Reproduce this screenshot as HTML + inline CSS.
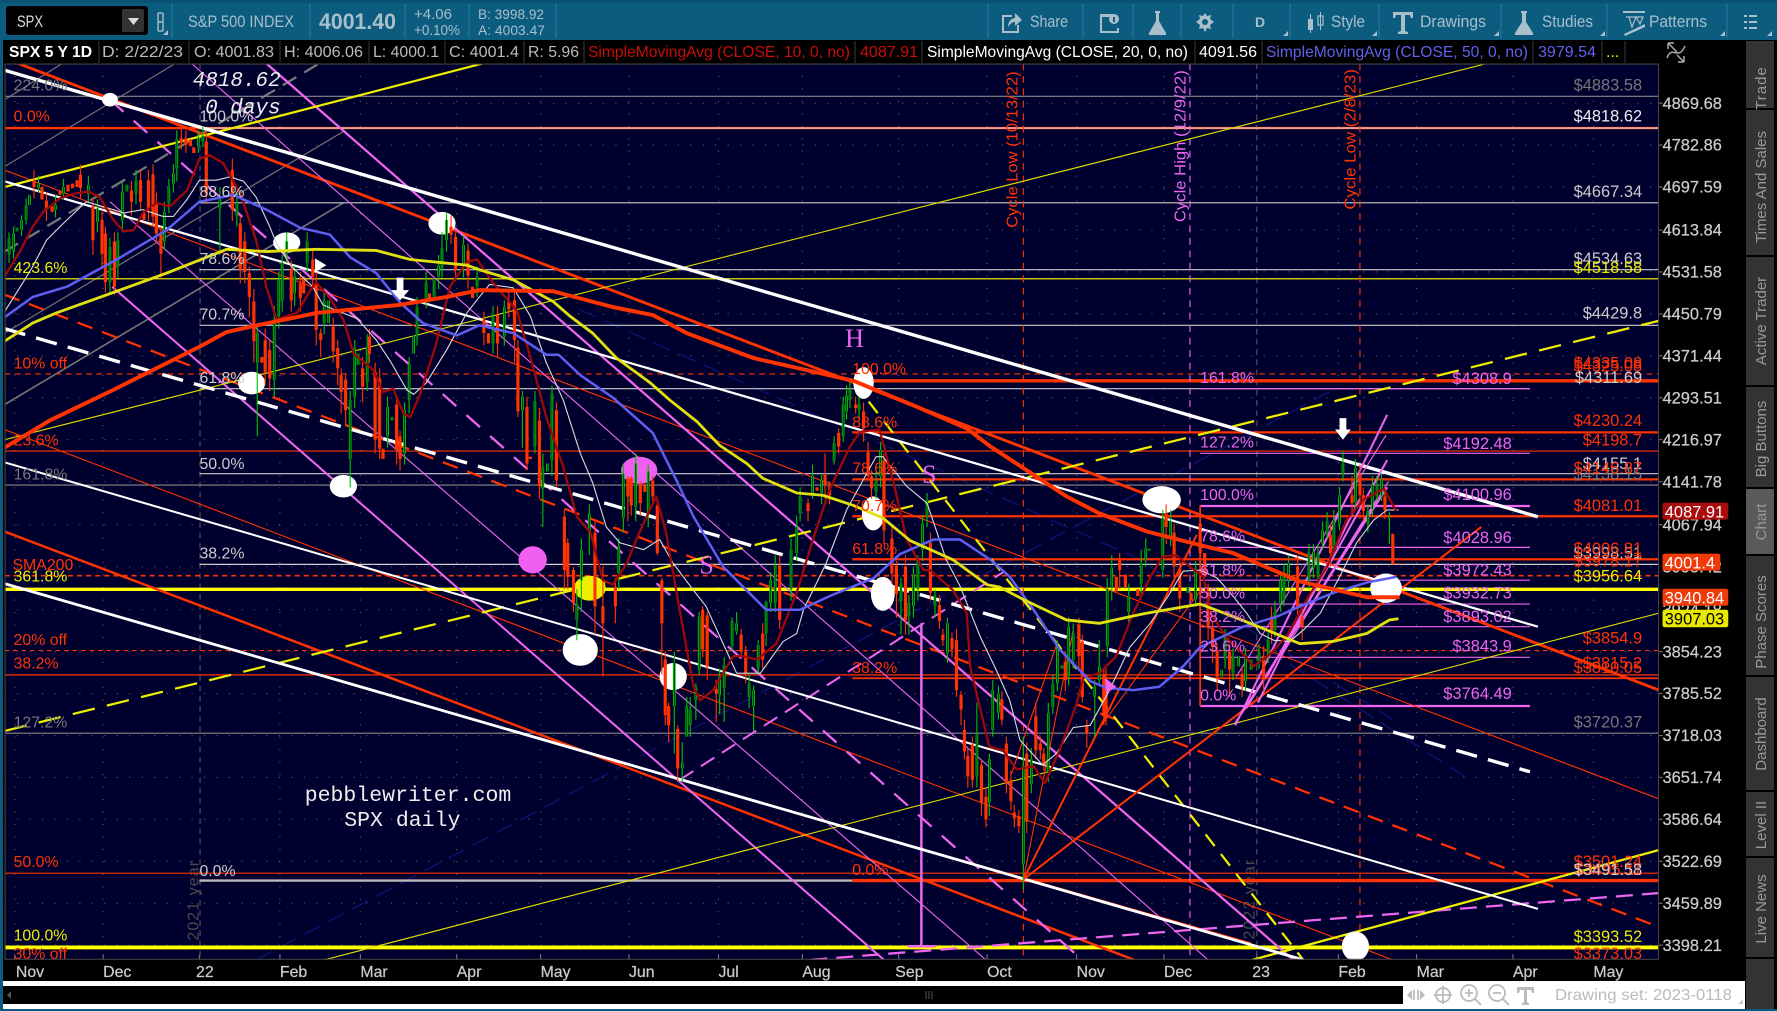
<!DOCTYPE html>
<html><head><meta charset="utf-8"><title>SPX</title>
<style>
html,body{margin:0;padding:0;background:#000;width:1777px;height:1011px;overflow:hidden}
svg{display:block;position:absolute;left:0;top:0}
text{font-family:"Liberation Sans",sans-serif}
.tb{fill:#a9bfca;font-size:16.5px}
.lg{font-size:16px;fill:#bbb}
.e{text-anchor:end;font-size:14.5px}
.f{font-size:14px}
.R{fill:#ff3300}.P{fill:#ee66ee}.Y{fill:#eeee00}.W{fill:#ccc}.G{fill:#777}
.ax{font-size:14.5px;fill:#ccc;stroke:#ccc;stroke-width:.2px}
.mo{font-size:14px;fill:#ccc;stroke:#ccc;stroke-width:.2px}
.tab{font-size:15px;fill:#999;text-anchor:middle}
</style></head><body>
<svg width="1777" height="1011" viewBox="0 0 1777 1011" xmlns="http://www.w3.org/2000/svg">
<rect width="1777" height="1011" fill="#000"/>
<!-- toolbar -->
<rect width="1777" height="40" fill="#0c5c80"/>
<rect width="1777" height="3" fill="#0a5274"/>
<rect x="0" y="40" width="3" height="971" fill="#0c5c80"/>
<rect x="0" y="1009" width="1777" height="2" fill="#0c5c80"/>
<g stroke="#1b7398" stroke-width="1.500">
<path d="M172 4V38M310 4V38M405 4V38M469 4V38M556 4V38M988 4V38M1083 4V38M1133 4V38M1181 4V38M1233 4V38M1290 4V38M1379 4V38M1501 4V38M1607 4V38M1727 4V38"/>
</g>
<rect x="6" y="6" width="142" height="29" rx="3" fill="#000"/>
<rect x="122" y="9" width="22" height="23" rx="2" fill="#333"/>
<path d="M128 18H139L133.500 25Z" fill="#ddd"/>
<text x="17" y="27" font-size="17" fill="#ddd" textLength="26" lengthAdjust="spacingAndGlyphs">SPX</text>
<rect x="158" y="13" width="5" height="9" rx="1" fill="none" stroke="#9fb6c2" stroke-width="1.500"/>
<rect x="158" y="22" width="5" height="9" rx="1" fill="none" stroke="#9fb6c2" stroke-width="1.500"/>
<path d="M168 35L163 35L168 30Z" fill="#a9bfca"/>
<text x="188" y="27" class="tb" style="font-size:17px" textLength="106" lengthAdjust="spacingAndGlyphs">S&amp;P 500 INDEX</text>
<text x="319" y="29" font-size="22" font-weight="bold" fill="#a9bfca" textLength="77" lengthAdjust="spacingAndGlyphs">4001.40</text>
<text x="414" y="19" font-size="14.500" fill="#a9bfca" textLength="38" lengthAdjust="spacingAndGlyphs">+4.06</text>
<text x="414" y="35" font-size="14.500" fill="#a9bfca" textLength="46" lengthAdjust="spacingAndGlyphs">+0.10%</text>
<text x="478" y="19" font-size="13.500" fill="#a9bfca" textLength="66" lengthAdjust="spacingAndGlyphs">B: 3998.92</text>
<text x="478" y="35" font-size="13.500" fill="#a9bfca" textLength="67" lengthAdjust="spacingAndGlyphs">A: 4003.47</text>
<!-- toolbar right icons -->
<g fill="#a9bfca">
<path d="M1002 15H1012V17H1004V31H1017V25H1019V33H1002Z"/><path d="M1008 27C1008 21 1012 18 1015 18V13L1022 20L1015 26V22C1012 22 1010 24 1008 27Z"/>
<text x="1030" y="27" class="tb" textLength="38" lengthAdjust="spacingAndGlyphs">Share</text>
<path d="M1100 14H1113V17H1102V31H1117V28H1119V33H1100Z"/><circle cx="1114" cy="19" r="5"/><rect x="1113" y="17" width="2" height="5" fill="#0c5c80"/>
<path d="M1155 11H1160V13H1159V21L1166 33V35H1149V33L1156 21V13H1155Z"/>
<path d="M1205 13L1207 16L1211 15L1210 19L1214 22L1210 25L1211 29L1207 28L1205 32L1203 28L1199 29L1200 25L1196 22L1200 19L1199 15L1203 16Z"/><circle cx="1205" cy="22" r="3" fill="#0c5c80"/>
<text x="1255" y="27" font-size="14" font-weight="bold" fill="#a9bfca">D</text>
<rect x="1308" y="19" width="5" height="11"/><rect x="1310" y="14" width="1" height="19"/><rect x="1318" y="16" width="5" height="9" fill="none" stroke="#a9bfca" stroke-width="1.200"/><rect x="1320" y="12" width="1" height="18"/>
<text x="1331" y="27" class="tb" textLength="34" lengthAdjust="spacingAndGlyphs">Style</text>
<path d="M1393 12H1413V18H1411L1410 15H1405V31L1408 32V34H1398V32L1401 31V15H1396L1395 18H1393Z"/>
<text x="1420" y="27" class="tb" textLength="66" lengthAdjust="spacingAndGlyphs">Drawings</text>
<path d="M1521 11H1527V13H1526V22L1533 33V35H1515V33L1522 22V13H1521Z"/>
<text x="1542" y="27" class="tb" textLength="51" lengthAdjust="spacingAndGlyphs">Studies</text>
<rect x="1623" y="11" width="22" height="2"/><path d="M1626 17H1643L1640 24L1636 17L1632 27L1629 17Z" fill="none" stroke="#a9bfca" stroke-width="1.200"/><path d="M1624 34L1645 24V27L1625 36Z"/>
<text x="1649" y="27" class="tb" textLength="58" lengthAdjust="spacingAndGlyphs">Patterns</text>
<rect x="1744" y="15" width="3" height="2"/><rect x="1749" y="15" width="8" height="2"/><rect x="1744" y="21" width="3" height="2"/><rect x="1749" y="21" width="8" height="2"/><rect x="1744" y="27" width="3" height="2"/><rect x="1749" y="27" width="8" height="2"/>
<path d="M1288 36H1283L1288 31ZM1377 36H1372L1377 31ZM1499 36H1494L1499 31ZM1605 36H1600L1605 31ZM1725 36H1720L1725 31ZM1772 36H1767L1772 31Z"/>
</g>
<!-- legend -->
<rect x="3" y="41" width="1742" height="22" fill="#000"/>
<g stroke="#3a3a3a" stroke-width="1"><path d="M99 41V63M189 41V63M280 41V63M369 41V63M445 41V63M524 41V63M584 41V63M855 41V63M922 41V63M1195 41V63M1262 41V63M1533 41V63M1602 41V63M1625 41V63"/></g>
<text x="9" y="57" font-size="16" font-weight="bold" fill="#fff" textLength="83" lengthAdjust="spacingAndGlyphs">SPX 5 Y 1D</text>
<text x="102" y="57" class="lg" textLength="81" lengthAdjust="spacingAndGlyphs">D: 2/22/23</text>
<text x="194" y="57" class="lg" textLength="80" lengthAdjust="spacingAndGlyphs">O: 4001.83</text>
<text x="284" y="57" class="lg" textLength="79" lengthAdjust="spacingAndGlyphs">H: 4006.06</text>
<text x="373" y="57" class="lg" textLength="66" lengthAdjust="spacingAndGlyphs">L: 4000.1</text>
<text x="449" y="57" class="lg" textLength="70" lengthAdjust="spacingAndGlyphs">C: 4001.4</text>
<text x="528" y="57" class="lg" textLength="51" lengthAdjust="spacingAndGlyphs">R: 5.96</text>
<text x="588" y="57" class="lg" style="fill:#c80c0c" textLength="262" lengthAdjust="spacingAndGlyphs">SimpleMovingAvg (CLOSE, 10, 0, no)</text>
<text x="860" y="57" class="lg" style="fill:#c80c0c" textLength="58" lengthAdjust="spacingAndGlyphs">4087.91</text>
<text x="927" y="57" class="lg" style="fill:#fff" textLength="261" lengthAdjust="spacingAndGlyphs">SimpleMovingAvg (CLOSE, 20, 0, no)</text>
<text x="1199" y="57" class="lg" style="fill:#fff" textLength="58" lengthAdjust="spacingAndGlyphs">4091.56</text>
<text x="1266" y="57" class="lg" style="fill:#6060f0" textLength="262" lengthAdjust="spacingAndGlyphs">SimpleMovingAvg (CLOSE, 50, 0, no)</text>
<text x="1538" y="57" class="lg" style="fill:#6060f0" textLength="58" lengthAdjust="spacingAndGlyphs">3979.54</text>
<text x="1606" y="57" class="lg" style="fill:#eeee00">...</text>
<path d="M1668 43L1677 52M1668 43V49M1668 43H1674M1684 62L1677 55M1684 62V56M1684 62H1678M1667 58C1672 44 1678 62 1685 46" fill="none" stroke="#aaa" stroke-width="1.500"/>
<!-- tabs -->
<g fill="#333">
<rect x="1746" y="41" width="28" height="67"/><rect x="1746" y="110" width="28" height="145"/><rect x="1746" y="257" width="28" height="128"/><rect x="1746" y="387" width="28" height="100"/><rect x="1746" y="489" width="28" height="65" fill="#5a5a5a"/><rect x="1746" y="556" width="28" height="119"/><rect x="1746" y="677" width="28" height="113"/><rect x="1746" y="792" width="28" height="64"/><rect x="1746" y="858" width="28" height="99"/><rect x="1746" y="959" width="28" height="50"/>
</g>
<g>
<text transform="translate(1766 88) rotate(-90)" class="tab" letter-spacing="1">Trade</text>
<text transform="translate(1766 187) rotate(-90)" class="tab">Times And Sales</text>
<text transform="translate(1766 321) rotate(-90)" class="tab">Active Trader</text>
<text transform="translate(1766 439) rotate(-90)" class="tab">Big Buttons</text>
<text transform="translate(1766 522) rotate(-90)" class="tab">Chart</text>
<text transform="translate(1766 622) rotate(-90)" class="tab">Phase Scores</text>
<text transform="translate(1766 734) rotate(-90)" class="tab">Dashboard</text>
<text transform="translate(1766 825) rotate(-90)" class="tab">Level II</text>
<text transform="translate(1766 909) rotate(-90)" class="tab">Live News</text>
</g>
<!-- bottom bars -->
<rect x="3" y="981" width="1742" height="28" fill="#fff"/>
<rect x="3" y="986" width="1400" height="18" fill="#000"/>
<path d="M7 995L11 991V999Z" fill="#555"/>
<path d="M926 991V999M929 991V999M932 991V999" stroke="#555" stroke-width="1"/>
<g fill="none" stroke="#bbb" stroke-width="1.800">
<path d="M1407 995L1412 990V1000ZM1425 995L1420 990V1000Z" fill="#bbb" stroke="none"/><path d="M1414 990V1000M1418 990V1000"/>
<circle cx="1443" cy="995" r="7"/><path d="M1434 995H1452M1443 986V1004"/>
<circle cx="1469" cy="993" r="8"/><path d="M1475 999L1481 1005M1465 993H1473M1469 989V997"/>
<circle cx="1497" cy="993" r="8"/><path d="M1503 999L1509 1005M1493 993H1501"/>
</g>
<path d="M1517 987H1534V993H1532L1531 990H1527V1002L1529 1003V1005H1522V1003L1524 1002V990H1520L1519 993H1517Z" fill="#bbb"/>
<text x="1555" y="1000" font-size="16" fill="#bbb" textLength="177" lengthAdjust="spacingAndGlyphs">Drawing set: 2023-0118</text>
<path d="M1743 1004H1738L1743 999Z" fill="#ccc"/>
<g transform="scale(1.13329)">
<!-- time axis -->
<text class="mo" x="14" y="862">Nov</text><text class="mo" x="91" y="862">Dec</text><text class="mo" x="173" y="862">22</text><text class="mo" x="247" y="862">Feb</text><text class="mo" x="318" y="862">Mar</text><text class="mo" x="403" y="862">Apr</text><text class="mo" x="477" y="862">May</text><text class="mo" x="555" y="862">Jun</text><text class="mo" x="634" y="862">Jul</text><text class="mo" x="708" y="862">Aug</text><text class="mo" x="790" y="862">Sep</text><text class="mo" x="871" y="862">Oct</text><text class="mo" x="950" y="862">Nov</text><text class="mo" x="1027" y="862">Dec</text><text class="mo" x="1105" y="862">23</text><text class="mo" x="1181" y="862">Feb</text><text class="mo" x="1250" y="862">Mar</text><text class="mo" x="1335" y="862">Apr</text><text class="mo" x="1406" y="862">May</text>
<!-- chart area -->
<svg x="4" y="56" width="1460" height="791" viewBox="4 56 1460 791" style="position:static;overflow:hidden">
<rect x="4" y="56" width="1460" height="791" fill="#00002e"/>
<!-- dotted grid -->
<g stroke="#5a5a5a" stroke-width="1" stroke-dasharray="1 10" fill="none">
<path d="M4 91H1464M4 128H1464M4 165H1464M4 203H1464M4 240H1464M4 277H1464M4 314H1464M4 351H1464M4 388H1464M4 425H1464M4 463H1464M4 500H1464M4 538H1464M4 575H1464M4 612H1464M4 649H1464M4 686H1464M4 723H1464M4 760H1464M4 797H1464M4 834H1464"/>
<path d="M13 56V847M91 56V847M247 56V847M318 56V847M403 56V847M477 56V847M555 56V847M634 56V847M708 56V847M793 56V847M871 56V847M950 56V847M1027 56V847M1181 56V847M1250 56V847M1335 56V847M1406 56V847"/>
</g>
<path d="M13 842V847M91 842V847M176 842V847M247 842V847M318 842V847M403 842V847M477 842V847M555 842V847M634 842V847M708 842V847M793 842V847M871 842V847M950 842V847M1027 842V847M1109 842V847M1181 842V847M1250 842V847M1335 842V847M1406 842V847" stroke="#777" fill="none"/>
<path d="M176.500 56V847M1109 56V847" stroke="#555" stroke-dasharray="5 4" fill="none"/>
<text transform="translate(175 830) rotate(-90)" font-size="14" fill="#4a4a4a" letter-spacing="1">2021 year</text>
<text transform="translate(1107 829) rotate(-90)" font-size="14" fill="#4a4a4a" letter-spacing="1">2022 year</text>
<!-- gray fan -->
<g fill="none" stroke="#777" stroke-width="1">
<path d="M4 147L153 57M4 88L55 56M4 294L303 116"/>
<path d="M4 357L303 179" stroke-width="1.400"/>
<path d="M4 222L280 57" stroke-width="2" stroke-dasharray="14 8"/>
</g>
<!-- dark navy -->
<g fill="none" stroke="#10106c" stroke-width="1.300" stroke-dasharray="16 8">
<path d="M226 847L1180 342M511 273L1000 491L1229 635M1118 573L1300 690"/>
</g>
<!-- horizontal levels -->
<g fill="none">
<path d="M4 85H1464" stroke="#888"/>
<path d="M4 113H1464" stroke="#ff3300" stroke-width="2"/><path d="M176 113H1464" stroke="#ddd" stroke-width="1.500" opacity=".75"/>
<path d="M176 179H1464M176 238H1464M176 287H1464M176 343H1350M176 418H1464M176 498H1464" stroke="#ccc"/>
<path d="M4 246H1464" stroke="#ffff00"/>
<path d="M4 330H1464" stroke="#ff3300" stroke-dasharray="5 4"/>
<path d="M752 336H1464" stroke="#ff3300" stroke-width="3"/>
<path d="M4 398H1464" stroke="#ff3300"/>
<path d="M752 381.500H1464" stroke="#ff3300" stroke-width="2"/>
<path d="M4 428H1464" stroke="#888"/>
<path d="M752 423H1464" stroke="#ff3300" stroke-width="2"/>
<path d="M752 455.500H1464" stroke="#ff3300" stroke-width="2"/>
<path d="M752 493.500H1464" stroke="#ff3300" stroke-width="2"/>
<path d="M4 508H1464" stroke="#ff3300" stroke-width="1.500" stroke-dasharray="4.500 3.500"/>
<path d="M4 520H1464" stroke="#ffff00" stroke-width="3"/>
<path d="M4 574H1464" stroke="#ff3300" stroke-dasharray="4 3.500"/>
<path d="M4 595.500H1464" stroke="#ff3300"/><path d="M752 598.500H1464" stroke="#ff3300" stroke-width="1.500"/>
<path d="M4 647H1464" stroke="#888"/>
<path d="M4 770.500H1464" stroke="#ff3300"/>
<path d="M176 777H752" stroke="#bbb" stroke-width="2"/>
<path d="M752 777H1464" stroke="#ff3300" stroke-width="3"/>
<path d="M4 836H1464" stroke="#ffff00" stroke-width="3.500"/>
<g stroke="#ee66ee"><path d="M1059 343H1350M1059 400H1350M1059 483H1350M1059 512H1350M1059 533H1350M1059 553H1350M1059 580H1350"/><path d="M1059 446.500H1350M1059 623H1350" stroke-width="2"/></g>
</g>
<!-- vertical cycle -->
<g fill="none" stroke-dasharray="6 5">
<path d="M903 56V847M1200 56V847" stroke="#ff3300"/><path d="M1050 56V847" stroke="#ee66ee"/>
</g>
<path d="M1059 446V623" stroke="#ff3300" stroke-width="1.500"/>
<!-- sloped lines -->
<g fill="none">
<path d="M4 150L1464 705" stroke="#ff3300" stroke-width="1"/>
<path d="M4 379L1229 847" stroke="#ff3300" stroke-width="1"/>
<path d="M509 662L1104 832" stroke="#ff3300" stroke-width="1"/>
<path d="M4 469L1001 847" stroke="#ff3300" stroke-width="2.200"/>
<path d="M4 260L1464 818" stroke="#ff3300" stroke-width="2" stroke-dasharray="14 9"/>
<path d="M16 56L1464 609" stroke="#ff3300" stroke-width="2.500"/>
<path d="M169 56L1066 847M97 178L870 847" stroke="#ee66ee" stroke-width="1"/>
<path d="M235 56L1141 847" stroke="#ee66ee" stroke-width="2"/>
<path d="M99 253L780 847" stroke="#ee66ee" stroke-width="1.800"/>
<path d="M97 88L955 847" stroke="#ee66ee" stroke-width="2" stroke-dasharray="16 12"/>
<path d="M600 688L885 505" stroke="#ee66ee" stroke-width="1.800" stroke-dasharray="14 8"/>
<path d="M813 550V835M801 835H826" stroke="#ee66ee" stroke-width="2.200"/>
<path d="M715 847L1464 788" stroke="#ee66ee" stroke-width="2" stroke-dasharray="15 8"/>
<path d="M753 337L1150 847" stroke="#eeee00" stroke-width="2" stroke-dasharray="13 9"/>
<path d="M4 165L426 56" stroke="#eeee00" stroke-width="2"/>
<path d="M4 645L1464 283" stroke="#eeee00" stroke-width="2" stroke-dasharray="20 11"/>
<path d="M4 388L1312 56" stroke="#dddd00" stroke-width="1"/>
<path d="M286 847L1464 541" stroke="#dddd00" stroke-width="1"/>
<path d="M1105 847L1464 750" stroke="#eeee00" stroke-width="2"/>
<path d="M4 62L1357 456" stroke="#fff" stroke-width="3"/>
<path d="M4 160L1357 553" stroke="#fff" stroke-width="2"/>
<path d="M4 290L1350 681" stroke="#fff" stroke-width="3" stroke-dasharray="19 10"/>
<path d="M4 408L1357 802" stroke="#fff" stroke-width="1.800"/>
<path d="M4 515L1150 847" stroke="#fff" stroke-width="2.500"/>
<!-- red fan -->
<path d="M903 776L1056 472M903 776L1307 465" stroke="#ff3300" stroke-width="1.800"/>
<path d="M903 776L947 556M932 570L892 684M972 640L1060 520" stroke="#ff3300" stroke-width="1"/>
<!-- pink rising -->
<path d="M1090 640L1224 366M1118 597L1224 406M1090 638L1224 430M1110 620L1200 440" stroke="#ee66ee" stroke-width="1.800"/>
<path d="M1091 597L1223 384M1100 625L1215 440M1130 580L1225 425" stroke="#ee66ee" stroke-width="1"/>
</g>
<!-- blobs -->
<g fill="#fff">
<ellipse cx="97" cy="88" rx="7" ry="6"/><ellipse cx="253" cy="214" rx="12" ry="9"/><ellipse cx="390" cy="197" rx="12" ry="10"/><ellipse cx="222" cy="338" rx="12" ry="10"/><ellipse cx="303" cy="429" rx="12" ry="10"/><ellipse cx="512" cy="573.500" rx="15.500" ry="14"/><ellipse cx="594" cy="597" rx="12" ry="12"/><ellipse cx="762" cy="338" rx="9" ry="14"/><ellipse cx="770.500" cy="453" rx="10" ry="15"/><ellipse cx="779" cy="524" rx="10.500" ry="15"/><ellipse cx="1025" cy="441" rx="17" ry="12"/><ellipse cx="1223" cy="519" rx="14" ry="13"/><ellipse cx="1196" cy="835" rx="12" ry="13"/>
<ellipse cx="564" cy="415" rx="16" ry="12" fill="#f060f0"/><ellipse cx="470" cy="494" rx="12.500" ry="12" fill="#f060f0"/><ellipse cx="520.500" cy="519" rx="14" ry="11" fill="#eeee00"/>
</g>
<!-- candles -->
<defs><path id="gb" d="M8 210V225M12 206V221M15 201V204M19 194V203M23 181V194M26 172V181M34 162V166M49 181V185M56 165V171M78 163V171M86 184V196M97 218V249M104 212V235M108 169V194M112 163V169M120 159V171M145 187V213M149 165V179M153 153V162M156 123V149M175 122V129M179 120V125M194 176V184M209 179V191M227 294V320M242 282V335M246 247V279M249 232V265M253 213V224M260 244V259M271 213V232M286 265V285M290 265V285M309 353V405M313 307V350M316 312V322M324 306V337M342 359V385M346 368V371M357 362V400M361 321V353M365 296V312M368 271V297M376 249V263M383 246V262M387 234V244M390 219V237M394 194V212M409 216V235M421 244V253M435 279V303M445 271V297M461 350V362M472 354V394M479 412V431M483 409V416M487 347V406M509 533V547M513 485V512M520 453V470M546 482V506M550 418V457M561 409V447M572 416V454M595 585V623M602 673V678M606 623V650M609 626V640M614 606V618M617 544V591M635 597V613M639 587V607M646 548V570M650 550V557M661 603V615M665 609V623M669 569V590M676 531V559M680 512V532M684 499V532M698 485V520M703 465V488M706 438V453M717 420V435M725 424V435M736 391V407M744 357V385M747 349V363M750 344V353M758 356V362M773 425V434M777 397V420M795 515V531M802 532V544M806 507V535M810 494V520M814 462V485M818 441V456M825 525V535M836 550V576M862 648V685M873 670V708M876 609V644M881 612V629M903 676V762M910 670V692M925 629V682M929 604V624M933 570V603M937 587V590M943 553V597M947 559V582M966 606V615M970 588V600M981 501V518M977 520V570M996 526V540M1007 497V515M1011 484V494M1014 484V486M1026 457V503M1033 460V475M1048 518V523M1055 503V529M1078 591V597M1081 562V582M1088 579V594M1093 579V588M1099 578V601M1104 582V591M1111 575V584M1119 565V579M1125 540V556M1130 512V532M1133 506V529M1137 497V512M1155 488V512M1159 487V501M1163 488V509M1167 468V479M1171 460V470M1177 459V485M1182 437V462M1185 409V418M1196 413V443M1207 451V462M1211 428V449M1215 429V438M1219 423V437M1226 456V457"/></defs>
<g fill="none">
<path stroke="#00c000" stroke-width="1" d="M8 205V232M12 200V228M19 190V208M23 175V198M34 155V170M49 172V192M56 158V176M78 155V178M86 176V205M97 210V258M104 205V245M108 160V205M120 150V180M145 178V220M149 158V188M153 145V170M156 115V160M175 115V135M179 112V130M194 165V225M209 170V200M227 285V385M242 270V350M246 240V290M249 225V275M253 205V232M260 235V270M271 205V240M286 255V295M309 345V430M313 300V360M324 295V345M342 350V395M357 355V410M361 315V365M368 262V305M376 240V272M387 225V255M390 205V245M394 188V222M409 208V245M421 235V262M435 270V312M445 265V305M461 345V395M472 345V400M479 400V465M487 340V420M509 520V565M513 475V540M520 445V490M546 475V520M550 410V470M561 400V460M572 410V465M595 575V665M602 655V690M606 615V650M609 615V650M614 603V635M617 540V595M635 590V630M639 580V637M646 545V575M650 540V560M661 595V625M665 605V645M669 565V595M676 530V570M680 505V540M684 490V540M698 475V530M703 455V495M706 430V460M717 410V440M725 418V445M736 385V410M744 350V390M747 340V370M750 335V360M758 350V370M773 415V440M777 390V430M795 510V560M802 525V560M806 500V545M810 490V530M814 455V495M818 435V465M825 520V545M836 545V585M862 620V695M873 665V720M876 600V650M881 605V635M903 650V785M910 660V700M925 620V690M929 595V630M933 565V610M943 545V605M947 550V590M966 600V650M970 565V605M981 490V530M977 510V580M996 515V550M1007 485V525M1011 475V500M1026 450V510M1033 450V482M1055 495V535M1081 555V590M1088 572V600M1099 572V610M1111 568V590M1119 558V585M1125 530V562M1130 505V540M1133 498V535M1137 490V518M1155 480V520M1159 480V510M1163 480V515M1167 460V485M1171 452V475M1177 450V490M1182 430V468M1185 398V425M1196 405V450M1207 445V470M1211 420V455M1215 420V442M1219 418V442M1226 452V480"/>
<use href="#gb" stroke="#00c800" stroke-width="2.400"/>
<use href="#gb" stroke="#002a10" stroke-width=".8"/>
<path stroke="#ff3300" stroke-width="1" d="M30 150V175M41 170V195M71 145V175M82 175V225M90 185V235M93 200V258M101 205V260M116 160V190M124 150V185M131 150V195M135 145V200M138 170V215M142 200V245M160 112V132M164 115V135M182 115V180M205 140V195M212 190V250M216 205V250M220 235V280M224 255V320M234 290V340M238 300V345M257 230V275M265 240V275M276 220V255M279 240V305M283 290V315M294 280V320M298 300V340M301 325V365M305 330V375M320 315V355M326 290V320M331 320V400M335 325V405M350 350V410M353 380V415M398 190V215M402 205V248M413 215V255M427 275V305M439 270V315M449 258V280M454 255V320M457 300V368M465 350V415M476 360V440M491 355V430M498 450V520M501 475V520M506 500V540M525 460V560M532 500V597M543 510V550M554 420V460M557 420V455M565 425V455M576 420V445M580 440V490M584 510V595M587 575V640M590 620V655M598 640V690M620 535V580M624 540V600M632 600V637M654 555V580M658 570V603M673 550V590M688 490V555M713 440V460M728 400V440M732 425V445M740 378V400M755 350V365M762 355V390M766 390V425M769 415V440M780 400V480M787 465V515M791 495V545M799 490V560M821 470V530M829 525V555M832 555V570M840 558V580M844 555V615M848 610V640M851 635V670M854 660V695M858 650V695M866 670V720M870 695V730M884 610V640M888 650V700M892 680V715M895 710V730M899 715V735M906 655V735M914 620V670M918 650V670M921 660V680M940 575V610M952 545V590M955 560V620M959 635V660M974 590V640M976 590V640M988 488V520M1029 445V480M1036 462V510M1041 495V540M1059 455V495M1066 515V565M1070 548V585M1074 568V610M1085 568V615M1096 588V615M1115 570V610M1122 535V568M1145 490V545M1149 535V565M1174 462V500M1193 420V455M1200 410V445M1203 430V460M1222 430V458"/>
<path stroke="#ff3300" stroke-width="2.800" d="M30 160V165M37 165V176M41 177V185M46 182V187M53 168V172M60 163V169M64 162V166M68 159V165M71 154V166M82 182V212M90 194V224M93 206V249M101 213V253M116 168V178M124 159V178M127 188V194M131 159V185M135 154V191M138 179V206M142 206V224M160 122V126M164 122V128M168 123V129M171 130V135M182 125V171M205 150V185M212 197V238M216 213V240M220 241V262M224 266V301M231 315V320M234 300V329M238 309V334M257 237V265M265 250V263M268 244V259M276 229V244M279 250V291M283 294V300M294 288V310M298 307V325M301 331V346M305 335V362M320 325V341M326 297V312M331 328V388M335 334V396M338 396V405M350 357V397M353 385V405M379 259V266M398 200V207M402 209V238M413 221V243M417 253V263M427 282V294M431 294V303M439 278V303M449 266V273M454 265V300M457 307V363M465 359V409M468 403V405M476 371V429M491 362V424M498 456V503M501 479V509M506 503V532M525 470V535M532 535V550M543 518V535M554 422V438M557 422V446M565 427V444M569 427V434M576 424V438M580 446V488M584 512V550M587 582V631M590 623V640M598 643V678M620 538V573M624 543V588M632 608V612M654 560V575M658 575V594M673 559V582M688 499V547M713 444V451M721 430V433M728 419V428M732 429V437M740 382V394M755 357V360M762 363V378M766 399V420M769 420V431M780 406V468M787 475V506M791 499V524M799 500V547M821 479V523M829 534V548M832 560V565M840 563V573M844 565V609M848 613V626M851 644V663M854 667V685M858 657V688M866 675V708M870 703V723M884 617V635M888 656V691M892 688V707M895 717V722M899 720V729M906 665V725M914 632V662M918 656V662M921 665V674M940 584V600M952 551V579M955 566V615M959 640V647M974 595V632M976 600V632M985 509V522M988 494V503M993 507V518M1004 520V526M1029 453V465M1036 470V500M1041 502V528M1051 523V530M1059 462V488M1063 488V509M1066 523V553M1070 554V571M1074 574V597M1085 575V591M1096 595V606M1115 579V600M1122 544V559M1145 500V535M1149 544V553M1174 472V488M1193 437V444M1200 419V437M1203 437V451M1222 438V450M1229 471V498M1234 497V498"/>
</g>
<!-- moving averages -->
<g fill="none" stroke-linejoin="round">
<path stroke="#d8d8d8" stroke-width="1" d="M4 275L18 253L29 235L41 212L56 197L76 178L100 185L109 188L126 185L144 191L153 191L165 176L176 159L191 159L203 156L215 160L226 174L238 200L244 215L257 235L276 253L285 269L297 274L315 281L332 300L344 318L359 344L365 348L376 338L394 309L412 276L423 262L432 251L453 254L468 279L482 320L497 353L512 400L523 426L535 465L547 479L568 485L582 476L594 497L612 521L623 535L650 594L671 594L691 566L703 559L709 538L729 497L747 450L773 403L779 403L800 429L818 444L835 494L847 517L865 562L879 591L891 618L900 653L920 675L932 665L947 642L962 640L979 609L997 571L1015 550L1032 524L1044 504L1059 503L1074 510L1088 526L1100 541L1112 559L1124 565L1138 566L1150 556L1165 541L1182 509L1197 479L1212 459L1224 450L1234 450"/>
<path stroke="#a00808" stroke-width="2" d="M4 244L18 221L29 200L38 187L53 175L65 171L78 169L88 174L100 194L109 204L118 203L126 188L138 179L150 182L165 168L176 140L185 137L197 144L212 171L226 212L235 253L244 282L262 276L274 256L279 249L291 263L303 282L312 312L329 326L338 346L347 343L356 365L362 368L371 347L385 303L397 253L412 231L421 229L429 241L438 253L456 274L468 315L482 368L497 412L509 456L521 470L532 512L541 516L553 497L565 468L579 438L588 471L600 540L612 606L618 618L629 609L647 579L656 579L668 582L685 568L703 523L718 474L732 432L750 394L759 381L776 379L788 424L800 476L815 503L821 503L841 521L853 541L856 588L873 659L885 662L897 679L912 676L922 691L935 662L950 621L956 598L970 594L985 579L1000 541L1015 509L1026 491L1038 490L1050 500L1062 509L1068 541L1082 562L1097 577L1106 588L1121 577L1135 562L1153 529L1171 500L1188 459L1203 441L1221 431L1232 451"/>
<path stroke="#5e5ef0" stroke-width="2.200" d="M4 280L29 262L59 253L103 229L147 203L176 178L206 172L235 185L265 201L291 207L309 227L332 241L353 267L373 285L403 296L423 287L453 294L482 313L493 313L512 331L541 351L576 382L597 424L612 456L638 500L659 521L676 538L706 538L732 526L771 510L794 489L824 476L847 476L874 494L891 509L912 538L935 573L962 601L976 607L1000 609L1023 606L1044 588L1059 571L1097 553L1127 544L1147 535L1177 523L1206 514L1232 509"/>
<path stroke="#e0e010" stroke-width="2.500" d="M4 301L29 285L50 276L103 257L147 241L200 220L235 222L279 220L332 221L362 229L412 234L423 238L453 247L488 266L503 279L523 294L544 316L574 338L591 353L615 372L635 393L659 409L673 422L703 435L726 437L753 446L779 457L803 477L841 494L871 516L882 518L903 529L941 547L970 550L1012 541L1059 533L1088 544L1118 556L1147 568L1176 566L1206 559L1226 547L1234 546"/>
<path stroke="#ff3300" stroke-width="3.500" d="M4 395L44 371L100 344L176 306L200 293L227 287L280 276L353 269L394 262L423 256L488 257L541 271L576 278L606 294L665 316L718 328L753 336L809 359L853 378L874 394L906 415L941 438L970 453L1012 469L1059 481L1088 488L1147 513L1177 520L1206 527L1235 527"/>
</g>
<!-- arrows -->
<g fill="#fff">
<path d="M350 245H356V256H361L353 265L345 256H350Z"/>
<path d="M1182 369H1188V379H1192L1185 388L1178 379H1182Z"/>
<path d="M278 228L288 234L278 240Z"/>
</g>
<path d="M975 598L985 606L976 612Z" fill="#ee66ee"/>
<!-- labels -->
<g class="f">
<text x="12" y="80" class="G">224.0%</text>
<text x="12" y="107" class="R">0.0%</text>
<text x="176" y="107" class="W">100.0%</text>
<text x="176" y="174" class="W">88.6%</text>
<text x="176" y="233" class="W">78.6%</text>
<text x="12" y="241" class="Y">423.6%</text>
<text x="176" y="282" class="W">70.7%</text>
<text x="12" y="325" class="R">10% off</text>
<text x="176" y="338" class="W">61.8%</text>
<text x="752" y="330" class="R">100.0%</text>
<text x="752" y="377" class="R">88.6%</text>
<text x="12" y="393" class="R">23.6%</text>
<text x="12" y="423" class="G">161.8%</text>
<text x="176" y="414" class="W">50.0%</text>
<text x="752" y="418" class="R">78.6%</text>
<text x="752" y="451" class="R">70.7%</text>
<text x="752" y="489" class="R">61.8%</text>
<text x="176" y="493" class="W">38.2%</text>
<text x="11" y="503" class="R">SMA200</text>
<text x="12" y="513" class="Y">361.8%</text>
<text x="12" y="569" class="R">20% off</text>
<text x="12" y="590" class="R">38.2%</text>
<text x="752" y="594" class="R">38.2%</text>
<text x="12" y="642" class="G">127.2%</text>
<text x="12" y="765" class="R">50.0%</text>
<text x="176" y="773" class="W">0.0%</text>
<text x="752" y="772" class="R">0.0%</text>
<text x="12" y="830" class="Y">100.0%</text>
<text x="12" y="846" class="R">30% off</text>
<text x="1059" y="338" class="P">161.8%</text><text x="1059" y="395" class="P">127.2%</text><text x="1059" y="441" class="P">100.0%</text><text x="1059" y="478" class="P">78.6%</text><text x="1059" y="508" class="P">61.8%</text><text x="1059" y="528" class="P">50.0%</text><text x="1059" y="549" class="P">38.2%</text><text x="1059" y="575" class="P">23.6%</text><text x="1059" y="618" class="P">0.0%</text>
</g>
<g>
<text x="1334" y="339" class="e P">$4308.9</text><text x="1334" y="396" class="e P">$4192.48</text><text x="1334" y="441" class="e P">$4100.96</text><text x="1334" y="479" class="e P">$4028.96</text><text x="1334" y="508" class="e P">$3972.43</text><text x="1334" y="528" class="e P">$3932.73</text><text x="1334" y="549" class="e P">$3893.02</text><text x="1334" y="575" class="e P">$3843.9</text><text x="1334" y="617" class="e P">$3764.49</text>
<text x="1449" y="80" class="e G">$4883.58</text><text x="1449" y="107" class="e W" style="fill:#eee">$4818.62</text><text x="1449" y="174" class="e W">$4667.34</text><text x="1449" y="233" class="e W">$4534.63</text><text x="1449" y="241" class="e Y">$4518.58</text><text x="1449" y="281" class="e W">$4429.8</text><text x="1449" y="325" class="e R">$4335.08</text><text x="1449" y="328" class="e R">$4325.08</text><text x="1449" y="338" class="e W">$4311.69</text><text x="1449" y="376" class="e R">$4230.24</text><text x="1449" y="393" class="e R">$4198.7</text><text x="1449" y="423" class="e G">$4138.15</text><text x="1449" y="414" class="e W">$4155.1</text><text x="1449" y="418" class="e R">$4146.87</text><text x="1449" y="451" class="e R">$4081.01</text><text x="1449" y="493" class="e W">$3998.51</text><text x="1449" y="489" class="e R">$4006.81</text><text x="1449" y="500" class="e R">$3978.17</text><text x="1449" y="513" class="e Y">$3956.64</text><text x="1449" y="568" class="e R">$3854.9</text><text x="1449" y="590" class="e R">$3815.2</text><text x="1449" y="594" class="e R">$3810.05</text><text x="1449" y="642" class="e G">$3720.37</text><text x="1449" y="765" class="e R">$3501.24</text><text x="1449" y="772" class="e R">$3495.11</text><text x="1449" y="772" class="e W">$3491.58</text><text x="1449" y="831" class="e Y">$3393.52</text><text x="1449" y="846" class="e R">$3373.03</text>
</g>
<text transform="translate(898 201) rotate(-90)" font-size="14" fill="#ff3300" textLength="138" lengthAdjust="spacingAndGlyphs">Cycle Low (10/13/22)</text>
<text transform="translate(1046 196) rotate(-90)" font-size="14" fill="#ee66ee" textLength="134" lengthAdjust="spacingAndGlyphs">Cycle High (12/9/22)</text>
<text transform="translate(1196 185) rotate(-90)" font-size="14" fill="#ff3300" textLength="124" lengthAdjust="spacingAndGlyphs">Cycle Low (2/8/23)</text>
<text x="754" y="306" font-size="23" fill="#ee66ee" text-anchor="middle" style="font-family:'Liberation Serif',serif">H</text>
<text x="820" y="426" font-size="23" fill="#ee66ee" text-anchor="middle" style="font-family:'Liberation Serif',serif">S</text>
<text x="623.500" y="506" font-size="23" fill="#ee66ee" text-anchor="middle" style="font-family:'Liberation Serif',serif">S</text>
<text x="170" y="76" font-size="18.500" fill="#eee" font-style="italic" style="font-family:'Liberation Mono',monospace">4818.62</text>
<text x="181" y="100" font-size="18.500" fill="#eee" font-style="italic" style="font-family:'Liberation Mono',monospace">0 days</text>
<text x="360" y="707" font-size="19" fill="#eee" text-anchor="middle" style="font-family:'Liberation Mono',monospace">pebblewriter.com</text>
<text x="355" y="729" font-size="19" fill="#eee" text-anchor="middle" style="font-family:'Liberation Mono',monospace">SPX daily</text>
<rect x="4.500" y="56.500" width="1459" height="790" fill="none" stroke="#444"/>
</svg>
<!-- right axis -->
<g>
<path d="M1464 91h3M1464 128h3M1464 165h3M1464 203h3M1464 240h3M1464 277h3M1464 314h3M1464 351h3M1464 388h3M1464 425h3M1464 463h3M1464 575h3M1464 612h3M1464 649h3M1464 686h3M1464 723h3M1464 760h3M1464 797h3M1464 834h3" stroke="#777"/>
<text class="ax" x="1467" y="96">4869.68</text><text class="ax" x="1467" y="133">4782.86</text><text class="ax" x="1467" y="170">4697.59</text><text class="ax" x="1467" y="208">4613.84</text><text class="ax" x="1467" y="245">4531.58</text><text class="ax" x="1467" y="282">4450.79</text><text class="ax" x="1467" y="319">4371.44</text><text class="ax" x="1467" y="356">4293.51</text><text class="ax" x="1467" y="393">4216.97</text><text class="ax" x="1467" y="430">4141.78</text><text class="ax" x="1467" y="468">4067.94</text><text class="ax" x="1467" y="505">3995.42</text><text class="ax" x="1467" y="543">3924.18</text><text class="ax" x="1467" y="580">3854.23</text><text class="ax" x="1467" y="617">3785.52</text><text class="ax" x="1467" y="654">3718.03</text><text class="ax" x="1467" y="691">3651.74</text><text class="ax" x="1467" y="728">3586.64</text><text class="ax" x="1467" y="765">3522.69</text><text class="ax" x="1467" y="802">3459.89</text><text class="ax" x="1467" y="839">3398.21</text>
<rect x="1467" y="443.500" width="58" height="15" rx="2" fill="#a80c0c"/><text x="1469" y="456.500" font-size="14.500" fill="#fff">4087.91</text>
<rect x="1467" y="488.500" width="51" height="15" rx="2" fill="#f03a0a"/><text x="1469" y="501.500" font-size="14.500" fill="#fff">4001.4</text>
<rect x="1467" y="519.500" width="58" height="15" rx="2" fill="#f03a0a"/><text x="1469" y="532.500" font-size="14.500" fill="#fff">3940.84</text>
<rect x="1467" y="538" width="58" height="15.500" rx="2" fill="#e8e800"/><text x="1469" y="551" font-size="14.500" fill="#000">3907.03</text>
</g>
</g>
</svg>
</body></html>
